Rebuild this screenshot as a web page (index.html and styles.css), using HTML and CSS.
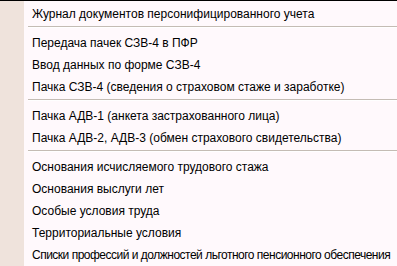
FILE: index.html
```html
<!DOCTYPE html>
<html lang="ru">
<head>
    <meta charset="UTF-8">
    <title>Меню</title>
    <link rel="stylesheet" href="styles.css">
</head>
<body>
    <div class="menu">
        <div class="menu-strip"></div>
        <div class="menu-list">
            <div class="menu-item">Журнал документов персонифицированного учета</div>
            <div class="menu-sep"></div>
            <div class="menu-item">Передача пачек СЗВ-4 в ПФР</div>
            <div class="menu-item">Ввод данных по форме СЗВ-4</div>
            <div class="menu-item">Пачка СЗВ-4 (сведения о страховом стаже и заработке)</div>
            <div class="menu-sep"></div>
            <div class="menu-item">Пачка АДВ-1 (анкета застрахованного лица)</div>
            <div class="menu-item">Пачка АДВ-2, АДВ-3 (обмен страхового свидетельства)</div>
            <div class="menu-sep"></div>
            <div class="menu-item">Основания исчисляемого трудового стажа</div>
            <div class="menu-item">Основания выслуги лет</div>
            <div class="menu-item">Особые условия труда</div>
            <div class="menu-item">Территориальные условия</div>
            <div class="menu-item menu-item-long">Списки профессий и должностей льготного пенсионного обеспечения</div>
        </div>
    </div>
</body>
</html>
```

FILE: styles.css
```css
body {
    margin: 0;
    background: #fff9fc;
    font-family: "Liberation Sans", Arial, sans-serif;
    font-size: 12px;
    color: #000;
    overflow: hidden;
}
.menu {
    display: flex;
    border-top: 1px solid #000;
    height: 265px;
}
.menu-strip {
    width: 24px;
    flex: none;
    background: #efe3dc;
}
.menu-list {
    flex: 1;
    padding-top: 2px;
    padding-left: 4px;
}
.menu-item {
    height: 22px;
    line-height: 22px;
    padding-left: 4px;
    white-space: nowrap;
}
/* самая длинная строка в эталоне уже за счёт узкого растрового шрифта */
.menu-item-long {
    letter-spacing: -0.5px;
}
.menu-sep {
    height: 6px;
}
.menu-sep::after {
    content: "";
    display: block;
    margin-top: 1px;
    height: 1px;
    background: #c4bcb4;
    border-bottom: 1px solid #fff;
}
```
